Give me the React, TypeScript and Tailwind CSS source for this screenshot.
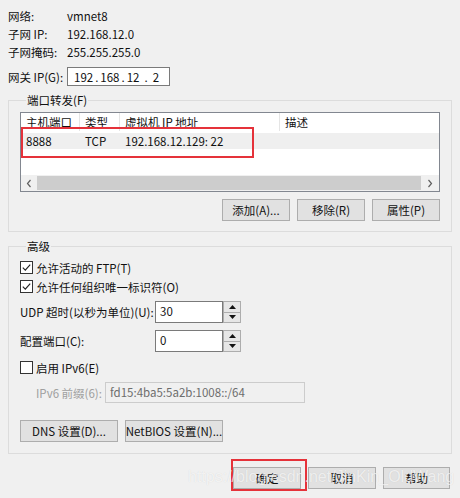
function Check({ checked }: { checked?: boolean }) {
  return (
    <span className="flex h-[13px] w-[13px] shrink-0 items-center justify-center border border-[#333333] bg-white">
      {checked && (
        <svg width="11" height="11" viewBox="0 0 11 11">
          <path d="M1.8 5.6 L4.3 8.1 L9.2 2.6" fill="none" stroke="#222" strokeWidth="1.2" />
        </svg>
      )}
    </span>
  );
}

function Spin() {
  return (
    <div className="flex h-full w-[18px] flex-col">
      <div className="flex flex-1 items-center justify-center border border-[#adadad] bg-[#e6e6e6]">
        <svg width="7" height="4" viewBox="0 0 7 4">
          <polygon points="0,4 3.5,0 7,4" fill="#111" />
        </svg>
      </div>
      <div className="flex flex-1 items-center justify-center border border-t-0 border-[#adadad] bg-[#e6e6e6]">
        <svg width="7" height="4" viewBox="0 0 7 4">
          <polygon points="0,0 3.5,4 7,0" fill="#111" />
        </svg>
      </div>
    </div>
  );
}

function Btn({ label, w = "w-[68px]" }: { label: string; w?: string }) {
  return (
    <div className={`flex h-[22px] items-center justify-center whitespace-nowrap border border-[#adadad] bg-[#e1e1e1] ${w}`}>
      {label}
    </div>
  );
}

export default function App() {
  return (
    <div className="relative h-[498px] w-[460px] overflow-hidden bg-[#f0f0f0] font-['Noto_Sans_CJK_SC','Liberation_Sans',sans-serif] text-[11.5px] leading-[16px] text-[#111]">
      {/* network info */}
      <div className="pl-[8px] pt-[7px]">
        <div className="flex h-[18px] items-center">
          <span className="w-[59px]">网络:</span>
          <span>vmnet8</span>
        </div>
        <div className="flex h-[18px] items-center">
          <span className="w-[59px]">子网 IP:</span>
          <span>192.168.12.0</span>
        </div>
        <div className="flex h-[18px] items-center">
          <span className="w-[59px]">子网掩码:</span>
          <span>255.255.255.0</span>
        </div>
        <div className="mt-[6px] flex h-[19px] items-center">
          <span className="w-[59px]">网关 IP(G):</span>
          <div className="flex h-full w-[103px] items-center whitespace-nowrap border border-[#7a7a7a] bg-white pl-[6px]">
            <span>192</span>
            <span className="px-[2px]">.</span>
            <span>168</span>
            <span className="px-[2px]">.</span>
            <span>12</span>
            <span className="px-[5px]">.</span>
            <span>2</span>
          </div>
        </div>
      </div>

      {/* port forwarding */}
      <div className="mx-[8px] mt-[14px] border border-[#dcdcdc] pb-[10px] pl-[11px] pr-[11px]">
        <div className="-mt-[9px] ml-[6px] w-fit bg-[#f0f0f0] px-[1px] leading-[16px]">端口转发(F)</div>
        <div className="relative mt-[4px] flex h-[80px] w-[420px] flex-col border border-[#828790] bg-white">
          <div className="flex h-[18px] items-stretch">
            <div className="flex w-[59px] items-center border-r border-[#e5e5e5] pl-[5px]">主机端口</div>
            <div className="flex w-[40px] items-center border-r border-[#e5e5e5] pl-[5px]">类型</div>
            <div className="flex w-[160px] items-center border-r border-[#e5e5e5] pl-[5px]">虚拟机 IP 地址</div>
            <div className="flex items-center pl-[5px]">描述</div>
          </div>
          <div className="ml-[2px] mt-[2px] flex h-[16px] items-center bg-[#efefef]">
            <span className="w-[57px] pl-[3px]">8888</span>
            <span className="w-[40px] pl-[5px]">TCP</span>
            <span className="pl-[5px]">192.168.12.129: 22</span>
          </div>
          <div className="flex-1" />
          <div className="flex h-[16px] items-stretch bg-[#f0f0f0]">
            <div className="flex w-[16px] items-center justify-center">
              <svg width="6" height="9" viewBox="0 0 6 9">
                <path d="M4.5 1 L1.5 4.5 L4.5 8" fill="none" stroke="#606060" strokeWidth="1.2" />
              </svg>
            </div>
            <div className="my-[1px] flex-1 bg-[#cdcdcd]" />
            <div className="flex w-[18px] items-center justify-center">
              <svg width="6" height="9" viewBox="0 0 6 9">
                <path d="M1.5 1 L4.5 4.5 L1.5 8" fill="none" stroke="#606060" strokeWidth="1.2" />
              </svg>
            </div>
          </div>
          <div className="absolute left-0 top-[14px] h-[31px] w-[233px] border-2 border-[#e5323a]" />
        </div>
        <div className="mt-[7px] flex justify-end gap-[7px]">
          <Btn label="添加(A)..." />
          <Btn label="移除(R)" />
          <Btn label="属性(P)" />
        </div>
      </div>

      {/* advanced */}
      <div className="mx-[8px] mt-[14px] border border-[#dcdcdc] pb-[11px] pl-[11px]">
        <div className="-mt-[9px] ml-[6px] w-fit bg-[#f0f0f0] px-[1px] leading-[16px]">高级</div>
        <div className="mt-[4px] flex h-[19px] items-center gap-[3px]">
          <Check checked />
          <span>允许活动的 FTP(T)</span>
        </div>
        <div className="flex h-[19px] items-center gap-[3px]">
          <Check checked />
          <span>允许任何组织唯一标识符(O)</span>
        </div>
        <div className="mt-[5px] flex h-[22px] items-center">
          <span className="w-[135px] whitespace-nowrap">UDP 超时(以秒为单位)(U):</span>
          <div className="flex h-full w-[68px] items-start border border-[#7a7a7a] bg-white pl-[4px] pt-[1px]">30</div>
          <Spin />
        </div>
        <div className="mt-[7px] flex h-[22px] items-center">
          <span className="w-[135px]">配置端口(C):</span>
          <div className="flex h-full w-[68px] items-start border border-[#7a7a7a] bg-white pl-[4px] pt-[1px]">0</div>
          <Spin />
        </div>
        <div className="mt-[6px] flex h-[19px] items-center gap-[3px]">
          <Check />
          <span>启用 IPv6(E)</span>
        </div>
        <div className="mt-[5px] flex h-[21px] items-center pl-[16px]">
          <span className="w-[69px] whitespace-nowrap text-[#a0a0a0]">IPv6 前缀(6):</span>
          <div className="flex h-full w-[200px] items-start border border-[#cccccc] bg-[#f0f0f0] pl-[4px] pt-[1px] text-[#6d6d6d]">
            fd15:4ba5:5a2b:1008::/64
          </div>
        </div>
        <div className="mt-[17px] flex gap-[7px]">
          <Btn label="DNS 设置(D)..." w="w-[98px]" />
          <Btn label="NetBIOS 设置(N)..." w="w-[98px]" />
        </div>
      </div>

      {/* dialog buttons */}
      <div className="mt-[13px] flex justify-end gap-[7px] pr-[10px]">
        <div className="relative">
          <Btn label="确定" />
          <div className="absolute -left-[2px] -top-[8px] h-[32px] w-[76px] border-2 border-[#e5323a]" />
        </div>
        <Btn label="取消" />
        <Btn label="帮助" w="w-[67px]" />
      </div>

      <div className="pointer-events-none absolute left-[188px] top-[467px] whitespace-nowrap font-['Liberation_Sans',sans-serif] text-[16px] leading-[20px] text-white/70 [text-shadow:0_0_1px_rgba(0,0,0,0.12)]">
        https://blog.csdn.net/JinKin_OldWang
      </div>
    </div>
  );
}
